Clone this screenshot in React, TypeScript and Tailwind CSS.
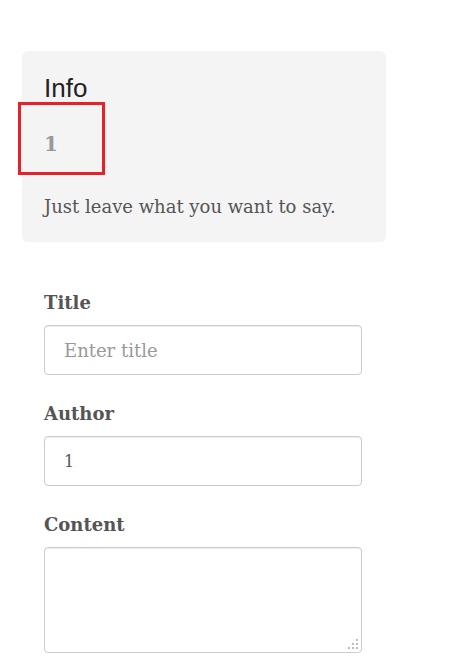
import React from 'react';

const serif = "font-['Georgia','DejaVu_Serif',serif]";

export default function App() {
  return (
    <div className={`min-h-[659px] bg-white pt-[51px] ${serif}`}>
      {/* Info card */}
      <div className="relative ml-[22px] h-[191px] w-[364px] rounded-md bg-[#f4f4f4] px-[22px] pt-[23px]">
        <h2 className="font-['Liberation_Sans',Arial,sans-serif] text-[26px] leading-[28px] text-[#222]">Info</h2>
        <p className="mt-[30px] text-[20px] font-bold leading-[24px] text-[#999]">1</p>
        <p className="mt-[40px] text-[18px] leading-[22px] text-[#555]">Just leave what you want to say.</p>
        <div className="pointer-events-none absolute left-[-4px] top-[51px] h-[73px] w-[87px] border-[3px] border-[#e8202a]" />
      </div>

      {/* Form */}
      <form className="ml-[44px] mt-[50px] w-[318px]">
        <label className="block text-[18px] font-bold leading-[22px] text-[#555]">Title</label>
        <input
          type="text"
          placeholder="Enter title"
          className="mt-[11px] block h-[50px] w-full rounded-[4px] border border-[#ccc] bg-white px-[19px] text-[18px] text-[#555] shadow-[inset_0_1px_1px_rgba(0,0,0,0.075)] outline-none placeholder:text-[#999]"
        />
        <label className="mt-[28px] block text-[18px] font-bold leading-[22px] text-[#555]">Author</label>
        <input
          type="text"
          defaultValue="1"
          className="mt-[11px] block h-[50px] w-full rounded-[4px] border border-[#ccc] bg-white px-[19px] text-[16px] text-[#555] shadow-[inset_0_1px_1px_rgba(0,0,0,0.075)] outline-none"
        />
        <label className="mt-[28px] block text-[18px] font-bold leading-[22px] text-[#555]">Content</label>
        <div className="relative mt-[11px]">
          <textarea className="block h-[106px] w-full resize-none rounded-[4px] border border-[#ccc] bg-white px-[19px] py-[12px] text-[18px] text-[#555] shadow-[inset_0_1px_1px_rgba(0,0,0,0.075)] outline-none" />
          {/* resize grip */}
          <svg className="pointer-events-none absolute bottom-[3px] right-[3px]" width="11" height="11" viewBox="0 0 11 11" fill="#bdbdbd">
            <rect x="8" y="0" width="2" height="2" />
            <rect x="4" y="4" width="2" height="2" />
            <rect x="8" y="4" width="2" height="2" />
            <rect x="0" y="8" width="2" height="2" />
            <rect x="4" y="8" width="2" height="2" />
            <rect x="8" y="8" width="2" height="2" />
          </svg>
        </div>
      </form>
    </div>
  );
}
